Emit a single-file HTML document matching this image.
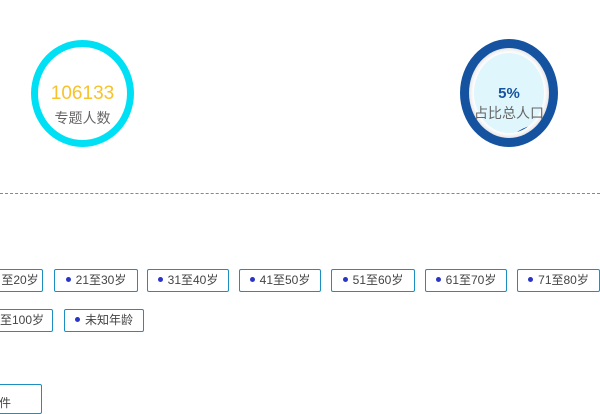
<!DOCTYPE html>
<html><head><meta charset="utf-8"><style>
body{margin:0;width:600px;height:400px;background:#fff;position:relative;overflow:hidden;font-family:"Liberation Sans","Noto Sans CJK SC",sans-serif}
.num{position:absolute;left:31px;width:103px;text-align:center}
.tag{position:absolute;height:23px;border:1px solid #1c8ec0;border-radius:2px;font-size:12px;color:#444;line-height:21px;box-sizing:border-box;text-align:center;white-space:nowrap;overflow:hidden}
.tag b{display:inline-block;width:5px;height:5px;border-radius:50%;background:#2a35c8;margin-right:5px;vertical-align:middle;position:relative;top:-1px}
</style></head><body>
<div style="position:absolute;left:31px;top:40px;width:103px;height:107px;border-radius:50%;border:7px solid #00e0f5;box-sizing:border-box"></div>
<div class="num" style="top:83px;font-size:19px;color:#f8c22a;">106133</div>
<div class="num" style="top:108px;font-size:14px;color:#666;">专题人数</div>
<div style="position:absolute;left:460px;top:39px;width:98px;height:108px;border-radius:50%;border:9px solid #1553a0;box-sizing:border-box;box-shadow:inset 0 0 6px #ccc;overflow:hidden">
 <div style="position:absolute;left:5px;top:5px;right:5px;bottom:5px;border-radius:50%;background:#dff6fd;overflow:hidden">
  <div style="position:absolute;left:36px;top:72px;width:60px;height:40px;border-radius:50%;background:#1553a0"></div>
 </div>
</div>
<div style="position:absolute;left:460px;width:98px;top:85px;text-align:center;font-size:15px;font-weight:bold;color:#1553a0">5%</div>
<div style="position:absolute;left:460px;width:98px;top:103px;text-align:center;font-size:14px;color:#666">占比总人口</div>
<div style="position:absolute;left:0;top:193px;width:600px;border-top:1px dashed #888"></div>
<div class="tag" style="left:-2px;top:269px;width:45px;border-left:none">至20岁</div>
<div class="tag" style="left:54px;top:269px;width:84px"><b></b>21至30岁</div>
<div class="tag" style="left:147px;top:269px;width:82px"><b></b>31至40岁</div>
<div class="tag" style="left:239px;top:269px;width:82px"><b></b>41至50岁</div>
<div class="tag" style="left:331px;top:269px;width:84px"><b></b>51至60岁</div>
<div class="tag" style="left:425px;top:269px;width:82px"><b></b>61至70岁</div>
<div class="tag" style="left:517px;top:269px;width:83px"><b></b>71至80岁</div>
<div class="tag" style="left:-2px;top:309px;width:55px;text-align:right;padding-right:8px">至100岁</div>
<div class="tag" style="left:64px;top:309px;width:80px"><b></b>未知年龄</div>
<div class="tag" style="left:-2px;top:384px;width:44px;height:30px;text-align:left;line-height:36px;padding-left:0">件</div>
</body></html>
